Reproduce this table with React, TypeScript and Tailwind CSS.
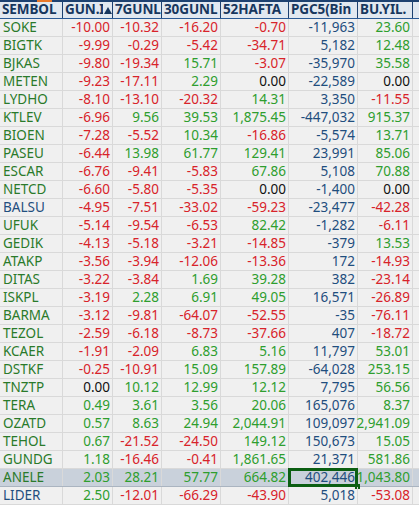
import React from "react";

type Row = [string, string, string, string, string, string, string, "g" | "b"];

const rows: Row[] = [
  ["SOKE", "-10.00", "-10.32", "-16.20", "-0.70", "-11,963", "23.60", "g"],
  ["BIGTK", "-9.99", "-0.29", "-5.42", "-34.71", "5,182", "12.48", "g"],
  ["BJKAS", "-9.80", "-19.34", "15.71", "-3.07", "-35,970", "35.58", "g"],
  ["METEN", "-9.23", "-17.11", "2.29", "0.00", "-22,589", "0.00", "g"],
  ["LYDHO", "-8.10", "-13.10", "-20.32", "14.31", "3,350", "-11.55", "g"],
  ["KTLEV", "-6.96", "9.56", "39.53", "1,875.45", "-447,032", "915.37", "g"],
  ["BIOEN", "-7.28", "-5.52", "10.34", "-16.86", "-5,574", "13.71", "g"],
  ["PASEU", "-6.44", "13.98", "61.77", "129.41", "23,991", "85.06", "g"],
  ["ESCAR", "-6.76", "-9.41", "-5.83", "67.86", "5,108", "70.88", "g"],
  ["NETCD", "-6.60", "-5.80", "-5.35", "0.00", "-1,400", "0.00", "g"],
  ["BALSU", "-4.95", "-7.51", "-33.02", "-59.23", "-23,477", "-42.28", "b"],
  ["UFUK", "-5.14", "-9.54", "-6.53", "82.42", "-1,282", "-6.11", "g"],
  ["GEDIK", "-4.13", "-5.18", "-3.21", "-14.85", "-379", "13.53", "g"],
  ["ATAKP", "-3.56", "-3.94", "-12.06", "-13.36", "172", "-14.93", "g"],
  ["DITAS", "-3.22", "-3.84", "1.69", "39.28", "382", "-23.14", "g"],
  ["ISKPL", "-3.19", "2.28", "6.91", "49.05", "16,571", "-26.89", "g"],
  ["BARMA", "-3.12", "-9.81", "-64.07", "-52.55", "-35", "-76.11", "g"],
  ["TEZOL", "-2.59", "-6.18", "-8.73", "-37.66", "407", "-18.72", "g"],
  ["KCAER", "-1.91", "-2.09", "6.83", "5.16", "11,797", "53.01", "g"],
  ["DSTKF", "-0.25", "-10.91", "15.09", "157.89", "-64,028", "253.15", "g"],
  ["TNZTP", "0.00", "10.12", "12.99", "12.12", "7,795", "56.56", "g"],
  ["TERA", "0.49", "3.61", "3.56", "20.06", "165,076", "8.37", "g"],
  ["OZATD", "0.57", "8.63", "24.94", "2,044.91", "109,097", "2,941.09", "g"],
  ["TEHOL", "0.67", "-21.52", "-24.50", "149.12", "150,673", "15.05", "g"],
  ["GUNDG", "1.18", "-16.46", "-0.41", "1,861.65", "21,371", "581.86", "g"],
  ["ANELE", "2.03", "28.21", "57.77", "664.82", "402,446", "1,043.80", "g"],
  ["LIDER", "2.50", "-12.01", "-66.29", "-43.90", "5,018", "-53.08", "b"],
];

const widths = ["w-[63px]", "w-[50px]", "w-[49px]", "w-[59px]", "w-[68px]", "w-[69px]", "w-[55px]"];
const headers = ["SEMBOL", "GUN.I", "7GUNL", "30GUNL", "52HAFTA", "PGC5(Bin", "BU.YIL."];

function valColor(v: string) {
  if (v.startsWith("-")) return "text-[#d8232a]";
  if (/^0\.00$/.test(v)) return "text-[#111111]";
  return "text-[#2e9e2e]";
}

export default function App() {
  return (
    <div
      className="w-[419px] h-[519px] bg-white overflow-hidden text-[13.5px] leading-none"
      style={{ fontFamily: '"Noto Sans", "Open Sans", sans-serif' }}
    >
      {/* header */}
      <div className="relative flex h-[19px] bg-[#e1e8f0] border-t-2 border-[#1d4170] border-b border-b-[#2a5a95]">
        <div className="absolute left-[37px] top-[-2px] w-[15px] h-[2px] bg-[#e8782a]" />
        {headers.map((h, i) => (
          <div
            key={h}
            className={`${widths[i]} shrink-0 h-full border-r border-[#1d4170] overflow-hidden whitespace-nowrap pl-[2px] flex items-center font-bold text-[13.5px] tracking-[-0.1px] text-[#17375e] relative`}
          >
            <span>{h}</span>
            {i === 1 && (
              <span className="absolute right-0 top-0 h-full w-[9px] flex items-center justify-center bg-[#e1e8f0]">
                <svg width="8" height="7" viewBox="0 0 8 7">
                  <polygon points="4,0 8,7 0,7" fill="#17375e" />
                </svg>
              </span>
            )}
          </div>
        ))}
        <div className="flex-1" />
      </div>
      {/* rows */}
      {rows.map((r) => {
        const sel = r[0] === "ANELE";
        return (
          <div
            key={r[0]}
            className={`flex h-[18px] border-b ${sel ? "bg-[#c9d1db] border-[#aab4c0]" : "bg-[#f0f0f0] border-[#d9d9d9]"}`}
          >
            <div
              className={`${widths[0]} shrink-0 border-r border-[#d9d9d9] pl-[3px] flex items-center whitespace-nowrap ${
                r[7] === "b" ? "text-[#1f4e7e]" : "text-[#2a7a2a]"
              }`}
            >
              {r[0]}
            </div>
            {r.slice(1, 7).map((v, i) => {
              const isPgc = i === 4;
              return (
                <div
                  key={i}
                  className={`${widths[i + 1]} shrink-0 border-r border-[#d9d9d9] pr-[2px] flex items-center justify-end whitespace-nowrap relative ${
                    isPgc ? "text-[#1f4e7e]" : valColor(v)
                  }`}
                >
                  {v}
                  {sel && isPgc && (
                    <>
                      <div className="absolute left-[-1px] top-[-1px] right-[-1px] bottom-[-1px] border-[3px] border-[#0b5e12]" />
                      <div className="absolute right-[-3px] bottom-[-3px] w-[5px] h-[5px] bg-[#0b5e12]" />
                    </>
                  )}
                </div>
              );
            })}
            <div className="flex-1" />
          </div>
        );
      })}
    </div>
  );
}
